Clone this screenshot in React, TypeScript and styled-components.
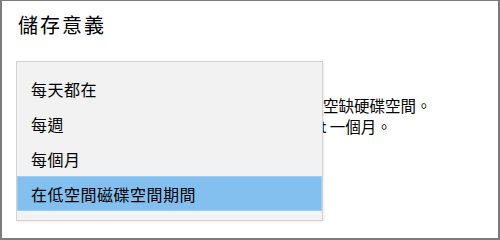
import React from "react";
import styled, { createGlobalStyle } from "styled-components";

const Global = createGlobalStyle`
  html, body { margin: 0; padding: 0; background: #ffffff; }
  body { font-family: "Noto Sans CJK TC", "Noto Sans", sans-serif; color: #000; }
`;

const Frame = styled.div`
  position: relative;
  box-sizing: border-box;
  width: 500px;
  height: 240px;
  background: #ffffff;
  border: 2px solid #7c7c7c;
  border-top-width: 1px;
  padding: 0 16px;
  overflow: hidden;
`;

const Title = styled.div`
  margin-top: 10px;
  font-size: 20px;
  line-height: 28px;
  letter-spacing: 2px;
  color: #000;
`;

const Toggle = styled.div<{ $on: boolean }>`
  margin-top: 22px;
  margin-left: -1px;
  width: 44px;
  height: 20px;
  border-radius: 10px;
  background: ${(p) => (p.$on ? "#0078d7" : "#ffffff")};
`;

const Paragraph = styled.div`
  margin-top: 14px;
  font-size: 15.5px;
  line-height: 21px;
  color: #000;
`;

const Line = styled.div<{ $indent: number }>`
  padding-left: ${(p) => p.$indent}px;
  white-space: nowrap;
`;

const Menu = styled.div`
  position: absolute;
  left: 14px;
  top: 60px;
  width: 307px;
  box-sizing: border-box;
  background: #f2f2f2;
  border: 1px solid #d2d2d2;
  box-shadow: 1px 1px 2px rgba(0, 0, 0, 0.08);
  padding: 9px 0 9px;
  z-index: 2;
`;

const Item = styled.div<{ $selected?: boolean }>`
  height: 35px;
  display: flex;
  align-items: center;
  padding-left: 14px;
  font-size: 16px;
  letter-spacing: 0.5px;
  color: #000;
  background: ${(p) => (p.$selected ? "#84c0ef" : "transparent")};
  box-shadow: ${(p) => (p.$selected ? "inset 0 0 0 1px #9dcdf3" : "none")};
`;

const options = ["每天都在", "每週", "每個月", "在低空間磁碟空間期間"];

export default function App() {
  return (
    <>
      <Global />
      <Frame>
        <Title>儲存意義</Title>
        <Toggle $on />
        <Paragraph>
          <Line $indent={305}>空缺硬碟空間。</Line>
          <Line $indent={294}>at 一個月。</Line>
        </Paragraph>
        <Menu>
          {options.map((o, i) => (
            <Item key={o} $selected={i === options.length - 1}>
              {o}
            </Item>
          ))}
        </Menu>
      </Frame>
    </>
  );
}
